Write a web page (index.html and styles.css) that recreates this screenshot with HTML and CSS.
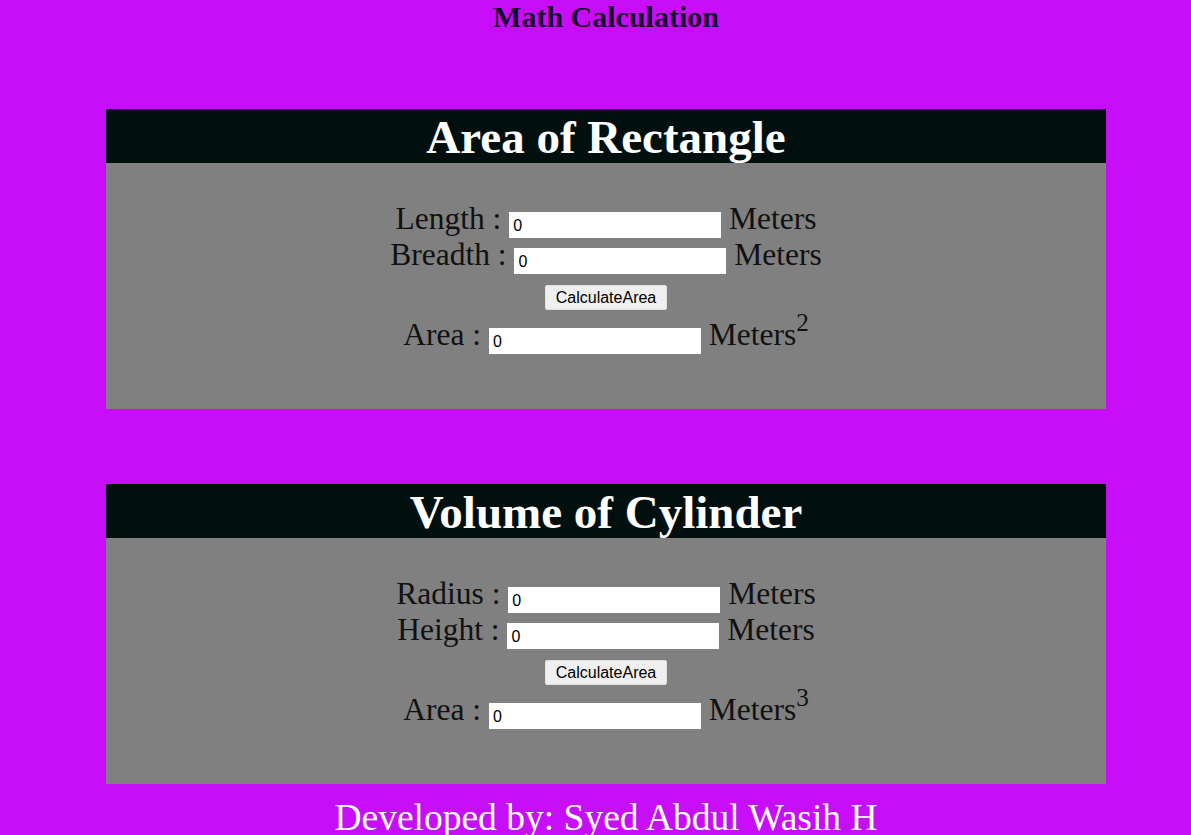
FILE: index.html
```html
<!DOCTYPE html>
<html>
<head>
<meta charset="utf-8">
<title>Math Calculation</title>
<link rel="stylesheet" href="styles.css">
</head>
<body>
<h1 class="title">Math Calculation</h1>

<div class="card card-first">
  <h2 class="card-head">Area of Rectangle</h2>
  <div class="card-body">
    <div class="row">Length : <input class="field" type="text" value="0"> Meters</div>
    <div class="row">Breadth : <input class="field" type="text" value="0"> Meters</div>
    <div class="row-btn"><button class="btn">CalculateArea</button></div>
    <div class="row">Area : <input class="field" type="text" value="0"> Meters<sup>2</sup></div>
  </div>
</div>

<div class="card card-second">
  <h2 class="card-head">Volume of Cylinder</h2>
  <div class="card-body">
    <div class="row">Radius : <input class="field" type="text" value="0"> Meters</div>
    <div class="row">Height : <input class="field" type="text" value="0"> Meters</div>
    <div class="row-btn"><button class="btn">CalculateArea</button></div>
    <div class="row">Area : <input class="field" type="text" value="0"> Meters<sup>3</sup></div>
  </div>
</div>

<div class="footer">Developed by: Syed Abdul Wasih H</div>
</body>
</html>
```
FILE: styles.css
```css
html, body {
  margin: 0;
  padding: 0;
}
body {
  background: #c80ef8;
  font-family: "Liberation Serif", "Times New Roman", serif;
  color: #111;
  padding-left: 21px;
  overflow: hidden;
}
.title {
  margin: 0;
  text-align: center;
  font-size: 30px;
  font-weight: bold;
  line-height: 34px;
  color: #1a0630;
}
.card {
  width: 1000px;
  margin: 0 auto;
  height: 300px;
  display: flex;
  flex-direction: column;
}
.card-first {
  margin-top: 75px;
}
.card-second {
  margin-top: 75px;
}
.card-head {
  margin: 0;
  height: 54px;
  background: #020f0f;
  color: #fff;
  text-align: center;
  font-size: 47px;
  font-weight: bold;
  line-height: 56px;
}
.card-body {
  flex: 1;
  background: #808080;
  padding-top: 38px;
  box-sizing: border-box;
}
.row {
  text-align: center;
  font-size: 31.5px;
  line-height: 36px;
  height: 36px;
  color: #111;
}
.row-btn {
  display: flex;
  justify-content: center;
  align-items: flex-start;
  box-sizing: border-box;
  height: 44px;
  padding-top: 12px;
}
.field {
  box-sizing: border-box;
  width: 212px;
  height: 26px;
  border: none;
  padding: 2px 4px 0;
  margin: 0;
  font-family: "Liberation Sans", Arial, sans-serif;
  font-size: 16px;
  color: #000;
  background: #fff;
  vertical-align: -2px;
}
.btn {
  font-family: "Liberation Sans", Arial, sans-serif;
  font-size: 16px;
  padding: 1px 10px;
  height: 25px;
  background: #efefef;
  border: 1px solid #e0e0e0;
  border-radius: 2px;
  color: #000;
}
sup {
  font-size: 0.8em;
  line-height: 0;
  vertical-align: 0.55em;
}
.footer {
  text-align: center;
  color: #fff;
  font-size: 37.5px;
  line-height: 40px;
  margin-top: 14px;
  white-space: nowrap;
}
```
